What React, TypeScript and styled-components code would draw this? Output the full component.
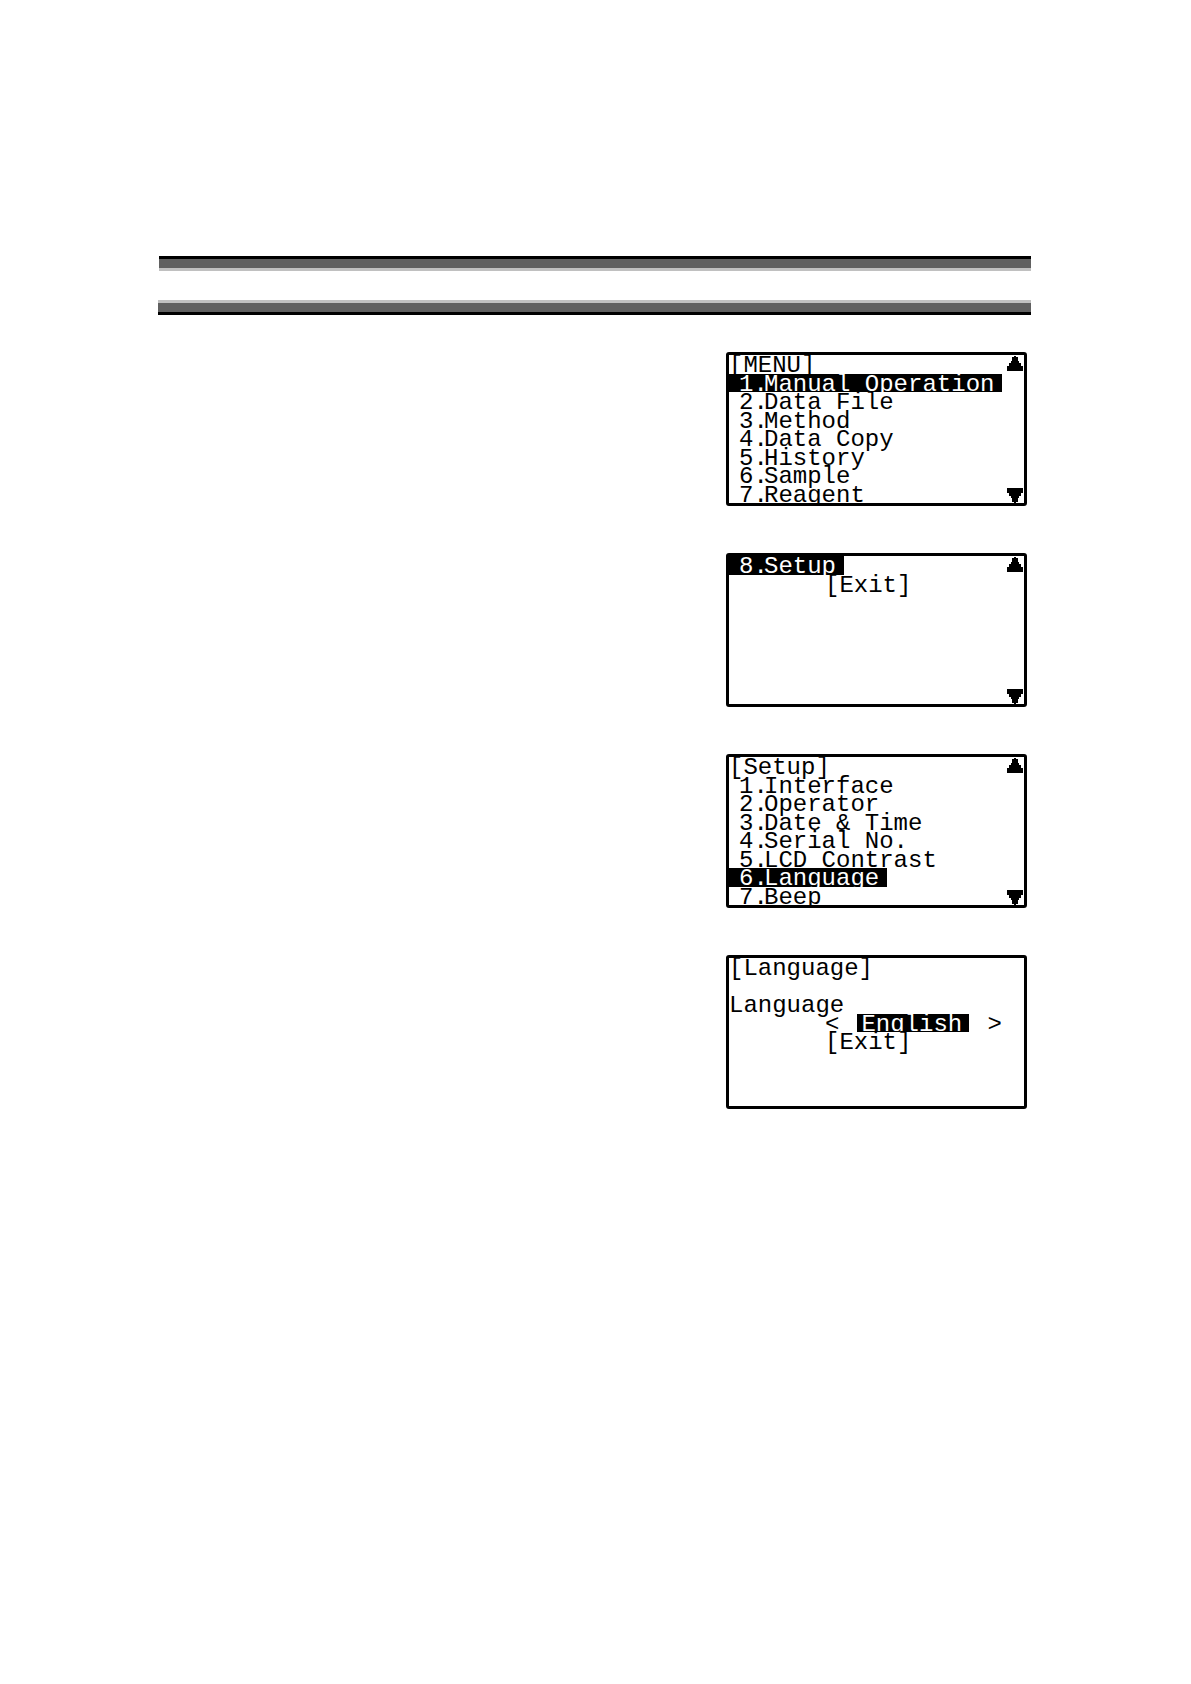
import React from "react";
import styled, { createGlobalStyle } from "styled-components";

const INK = "#000000";
const PAPER = "#ffffff";

const GlobalStyle = createGlobalStyle`
  body { margin: 0; background: ${PAPER}; }
  *, *::before, *::after { box-sizing: border-box; }
`;

const Page = styled.main`
  padding: 256px 160px 160px 159px;
`;

const Rules = styled.header`
  display: flex;
  flex-direction: column;
  gap: 29px;
`;

const Rule = styled.div<{ $flip?: boolean }>`
  height: 15px;
  margin-left: ${(p) => (p.$flip ? "-1px" : "0")};
  background: linear-gradient(
    ${(p) => (p.$flip ? "to top" : "to bottom")},
    ${INK} 3px,
    #606060 3px 12px,
    #c0c0c0 12px
  );
`;

const Screens = styled.div`
  display: flex;
  flex-direction: column;
  align-items: flex-end;
  gap: 47px;
  padding: 37px 4px 0 0;
`;

const Lcd = styled.section`
  display: flex;
  width: 301px;
  height: 154px;
  overflow: hidden;
  border: 3px solid ${INK};
  border-radius: 3px;
  background: ${PAPER};
  color: ${INK};
  font-family: "Liberation Mono", monospace;
  font-size: 24px;
  line-height: 21px;
`;

const Lines = styled.div`
  flex: 1;
  display: grid;
  grid-template-rows: repeat(8, minmax(0, 1fr));
  justify-items: start;
`;

const Title = styled.h2`
  margin: 0;
  font: inherit;
  white-space: pre;
`;

const Key = styled.button`
  margin: 0;
  padding: 0;
  border: 0;
  background: none;
  color: inherit;
  font: inherit;
  line-height: inherit;
  text-align: left;
  white-space: pre;
`;

const Item = styled(Key)<{ $active?: boolean }>`
  display: grid;
  grid-template-columns: 25px auto;
  align-items: start;
  align-content: start;
  padding: 0 8px 0 10px;
  background: ${(p) => (p.$active ? INK : "transparent")};
  color: ${(p) => (p.$active ? PAPER : INK)};
`;

const Exit = styled(Key)`
  display: flex;
  align-items: flex-start;
  margin-left: 96px;
`;

const Picker = styled.div`
  display: flex;
  margin-left: 96px;
`;

const Step = styled(Key)`
  display: flex;
  align-items: flex-start;
`;

const Value = styled.output`
  width: 112px;
  margin: 0 18px;
  padding-left: 4px;
  background: ${INK};
  color: ${PAPER};
`;

const Scroll = styled.div`
  display: flex;
  flex-direction: column;
  justify-content: space-between;
  padding: 1px 1px 0 0;
`;

const Arrow = ({ down = false }: { down?: boolean }) => (
  <svg width="16" height="15" viewBox="0 0 16 15" aria-hidden="true" shapeRendering="crispEdges">
    <path
      fill={INK}
      transform={down ? "matrix(1 0 0 -1 0 15)" : undefined}
      d="M7 0H9V1H11V5H12V7H14V10H16V15H0V10H2V7H4V5H5V1H7Z"
    />
  </svg>
);

const ScrollMarks = () => (
  <Scroll>
    <Arrow />
    <Arrow down />
  </Scroll>
);

interface MenuProps {
  title?: string;
  first?: number;
  items: string[];
  active: string;
  exit?: boolean;
}

const Menu = ({ title, first = 1, items, active, exit }: MenuProps) => (
  <Lcd>
    <Lines>
      {title && <Title>{title}</Title>}
      {items.map((label, i) => (
        <Item key={label} type="button" $active={label === active}>
          <span>{first + i}.</span>
          <span>{label}</span>
        </Item>
      ))}
      {exit && <Exit type="button">[Exit]</Exit>}
    </Lines>
    <ScrollMarks />
  </Lcd>
);

const LanguageScreen = () => (
  <Lcd>
    <Lines>
      <Title>[Language]</Title>
      <span />
      <span id="language">Language</span>
      <Picker role="group" aria-labelledby="language">
        <Step type="button">&lt;</Step>
        <Value>English</Value>
        <Step type="button">&gt;</Step>
      </Picker>
      <Exit type="button">[Exit]</Exit>
    </Lines>
  </Lcd>
);

export default function App() {
  return (
    <>
      <GlobalStyle />
      <Page>
        <Rules>
          <Rule />
          <Rule $flip />
        </Rules>
        <Screens>
          <Menu
            title="[MENU]"
            items={["Manual Operation", "Data File", "Method", "Data Copy", "History", "Sample", "Reagent"]}
            active="Manual Operation"
          />
          <Menu first={8} items={["Setup"]} active="Setup" exit />
          <Menu
            title="[Setup]"
            items={["Interface", "Operator", "Date & Time", "Serial No.", "LCD Contrast", "Language", "Beep"]}
            active="Language"
          />
          <LanguageScreen />
        </Screens>
      </Page>
    </>
  );
}
